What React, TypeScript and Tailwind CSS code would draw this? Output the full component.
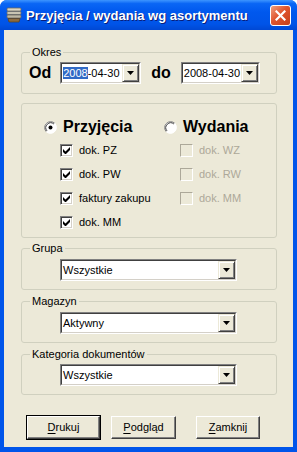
import React from 'react';

const Arrow: React.FC = () => (
  <svg width="7" height="4" viewBox="0 0 7 4">
    <path d="M0 0h7L3.5 4z" fill="#000" />
  </svg>
);

const DropButton: React.FC = () => (
  <div className="w-[17px] h-full flex items-center justify-center bg-[#ECE9D8] border-t border-l border-[#ECE9D8] border-r border-b border-r-[#404040] border-b-[#404040] shadow-[inset_1px_1px_0_#fff,inset_-1px_-1px_0_#808080]">
    <Arrow />
  </div>
);

interface ComboProps {
  value: React.ReactNode;
  className?: string;
}

// klasyczne pole combo z wklęsłą ramką
const Combo: React.FC<ComboProps> = ({ value, className }) => (
  <div className={`h-[22px] border-t border-l border-[#808080] border-r border-b border-r-white border-b-white ${className ?? ''}`}>
    <div className="h-full flex bg-white border-t border-l border-[#404040] border-r border-b border-r-[#D4D0C8] border-b-[#D4D0C8]">
      <div className="flex-1 flex items-center pl-[1px] text-[11px] text-black leading-none">{value}</div>
      <DropButton />
    </div>
  </div>
);

const Check: React.FC<{ label: string; disabled?: boolean }> = ({ label, disabled }) => (
  <div className="flex items-center h-[13px] gap-[6px]">
    <div
      className={`w-[13px] h-[13px] flex items-center justify-center border-t border-l border-r border-b ${
        disabled
          ? 'border-[#ACA899] bg-[#ECE9D8] border-r-white border-b-white'
          : 'border-[#808080] bg-white border-r-white border-b-white shadow-[inset_1px_1px_0_#404040,inset_-1px_-1px_0_#D4D0C8]'
      }`}
    >
      {!disabled && (
        <svg width="7" height="7" viewBox="0 0 7 7">
          <path d="M0 2v3l2 2h1l4-4V0L2.5 4.5z" fill="#000" />
        </svg>
      )}
    </div>
    <span className={`text-[11px] leading-none ${disabled ? 'text-[#ACA899]' : 'text-black'}`}>{label}</span>
  </div>
);

const Radio: React.FC<{ label: string; checked?: boolean }> = ({ label, checked }) => (
  <div className="flex items-center gap-[6px] h-[16px]">
    <svg width="13" height="13" viewBox="0 0 13 13">
      <circle cx="6.5" cy="6.5" r="6" fill="#fff" />
      <path d="M2.26 10.74A6 6 0 0 1 10.74 2.26" fill="none" stroke="#808080" />
      <path d="M3 9.9A4.9 4.9 0 0 1 9.9 3" fill="none" stroke="#404040" />
      <path d="M10.74 2.26A6 6 0 0 1 2.26 10.74" fill="none" stroke="#fff" />
      {checked && <circle cx="6.5" cy="6.5" r="2" fill="#000" />}
    </svg>
    <span className="text-[16px] font-bold leading-none text-black">{label}</span>
  </div>
);

const Group: React.FC<{ title: string; className?: string; children: React.ReactNode }> = ({ title, className, children }) => (
  <fieldset className={`border border-[#D0D0BF] rounded-[3px] ${className ?? ''}`}>
    <legend className="ml-[8px] px-[2px] text-[11px] leading-[12px] text-black">{title}</legend>
    {children}
  </fieldset>
);

const Btn: React.FC<{ mnemonic: string; rest: string; width: string; isDefault?: boolean }> = ({ mnemonic, rest, width, isDefault }) => (
  <div className={`${width} ${isDefault ? 'h-[25px] border border-black' : 'h-[23px] mt-[1px]'} flex`}>
    <div className="flex-1 flex items-center justify-center bg-[#ECE9D8] border-t border-l border-white border-r border-b border-r-[#404040] border-b-[#404040] shadow-[inset_-1px_-1px_0_#808080] text-[11px] text-black">
      <span>
        <span className="underline underline-offset-[2px]">{mnemonic}</span>
        {rest}
      </span>
    </div>
  </div>
);

const TitleIcon: React.FC = () => (
  <svg width="16" height="16" viewBox="0 0 16 16">
    <rect x="1" y="1" width="14" height="3" rx="1" fill="#D8D4C4" stroke="#6E6A5E" strokeWidth="0.8" />
    <rect x="1" y="4.5" width="14" height="3" rx="1" fill="#C9C4B2" stroke="#6E6A5E" strokeWidth="0.8" />
    <rect x="1" y="8" width="14" height="3" rx="1" fill="#BDB7A4" stroke="#6E6A5E" strokeWidth="0.8" />
    <path d="M2 11.5h12l-1 3.5H3z" fill="#8B6A3E" stroke="#5A4424" strokeWidth="0.8" />
  </svg>
);

export default function App() {
  return (
    <div className="w-[297px] h-[452px] flex flex-col bg-[#0055EA] rounded-t-[7px] font-['Liberation_Sans',Arial,sans-serif] overflow-hidden">
      {/* pasek tytułu */}
      <div className="h-[30px] shrink-0 flex items-center pl-[6px] pr-[6px] bg-[linear-gradient(#3D95FF_0%,#0A66F5_12%,#0058EE_40%,#0054E8_80%,#0048D4_100%)]">
        <TitleIcon />
        <span className="ml-[4px] text-[13px] font-bold text-white leading-none [text-shadow:1px_1px_0_#0A1E7A]">
          Przyjęcia / wydania wg asortymentu
        </span>
        <div className="ml-auto w-[21px] h-[21px] rounded-[3px] border border-white bg-[linear-gradient(135deg,#F0A080_0%,#E0552E_45%,#C6401A_100%)] flex items-center justify-center">
          <svg width="11" height="11" viewBox="0 0 11 11">
            <path d="M1.5 1.5l8 8M9.5 1.5l-8 8" stroke="#fff" strokeWidth="2.2" strokeLinecap="square" />
          </svg>
        </div>
      </div>

      {/* zawartość okna */}
      <div className="flex-1 mx-[4px] mb-[5px] bg-[#ECE9D8] pl-[17px] pr-[16px] pt-[16px] flex flex-col text-black">
        <Group title="Okres" className="h-[48px]">
          <div className="flex items-center pt-[4px] pl-[7px]">
            <span className="text-[16px] font-bold leading-none">Od</span>
            <Combo
              className="ml-[9px] w-[81px]"
              value={
                <span>
                  <span className="bg-[#316AC5] text-white">2008</span>-04-30
                </span>
              }
            />
            <span className="ml-[10px] text-[16px] font-bold leading-none">do</span>
            <Combo className="ml-[10px] w-[79px]" value="2008-04-30" />
          </div>
        </Group>

        <div className="mt-[9px] h-[135px] border border-[#D0D0BF] rounded-[3px] pl-[22px] pt-[15px]">
          <div className="grid grid-cols-[120px_1fr]">
            <Radio label="Przyjęcia" checked />
            <Radio label="Wydania" />
          </div>
          <div className="grid grid-cols-[120px_1fr] pl-[16px] mt-[9px] gap-y-[11px]">
            <Check label="dok. PZ" />
            <Check label="dok. WZ" disabled />
            <Check label="dok. PW" />
            <Check label="dok. RW" disabled />
            <Check label="faktury zakupu" />
            <Check label="dok. MM" disabled />
            <Check label="dok. MM" />
          </div>
        </div>

        <Group title="Grupa" className="mt-[4px] h-[48px]">
          <Combo className="mt-[5px] ml-[38px] w-[177px]" value="Wszystkie" />
        </Group>

        <Group title="Magazyn" className="mt-[5px] h-[48px]">
          <Combo className="mt-[5px] ml-[38px] w-[177px]" value="Aktywny" />
        </Group>

        <Group title="Kategoria dokumentów" className="mt-[5px] h-[47px]">
          <Combo className="mt-[4px] ml-[38px] w-[177px]" value="Wszystkie" />
        </Group>

        <div className="mt-[20px] flex items-start pl-[5px]">
          <Btn mnemonic="D" rest="rukuj" width="w-[75px]" isDefault />
          <div className="ml-[10px]">
            <Btn mnemonic="P" rest="odgląd" width="w-[65px]" />
          </div>
          <div className="ml-[20px]">
            <Btn mnemonic="Z" rest="amknij" width="w-[64px]" />
          </div>
        </div>
      </div>
    </div>
  );
}
